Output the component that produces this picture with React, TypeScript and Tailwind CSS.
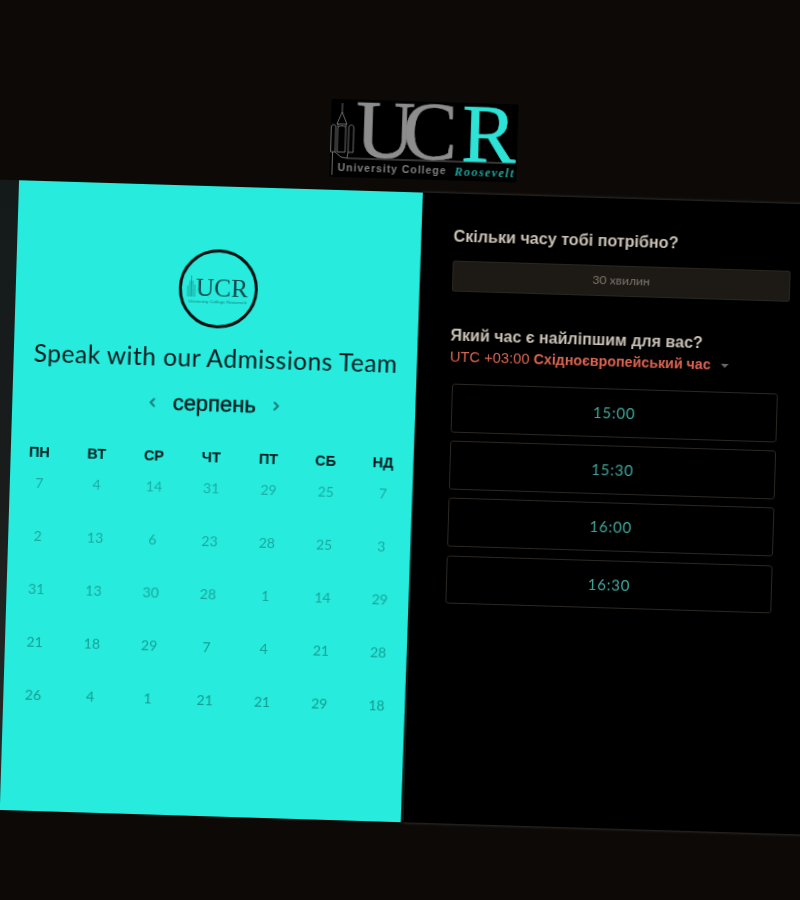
import { ChevronLeft, ChevronRight } from "lucide-react";

const days = ["ПН", "ВТ", "СР", "ЧТ", "ПТ", "СБ", "НД"];
const rows = [
  { color: "text-[#1aada4]", cells: [7, 4, 14, 31, 29, 25, 7] },
  { color: "text-[#19a99f]", cells: [2, 13, 6, 23, 28, 25, 3] },
  { color: "text-[#18a59b]", cells: [31, 13, 30, 28, 1, 14, 29] },
  { color: "text-[#16a096]", cells: [21, 18, 29, 7, 4, 21, 28] },
  { color: "text-[#149b91]", cells: [26, 4, 1, 21, 21, 29, 18] },
];
const slots = ["15:00", "15:30", "16:00", "16:30"];

function Tower({ color }: { color: string }) {
  return (
    <g fill="none" stroke={color} strokeWidth="0.8">
      <path d="M11 4 L11 13 M11 13 L6 25 L16 25 Z M7 25 L7 28 M15 25 L15 28" />
      <path d="M2.5 53 L2.5 76 M0.5 28 C0.5 25 5 25 5 28 L5 53 L0.5 53 Z M18 28 C18 25 23 25 23 28 L23 53 L18 53 Z M7 29 C7 26 15 26 15 29 L15 53 L7 53 Z" />
      <path d="M5 53 L11 58 L17 59 M18 53 L17 59" />
      <path d="M17 59 L185 59" />
    </g>
  );
}

function Logo() {
  return (
    <svg width="187" height="78" viewBox="0 0 187 78" className="block ml-[310px]">
      <rect width="187" height="78" fill="#000" />
      <Tower color="#858585" />
      <g fontFamily="'Liberation Serif', serif" fontSize="82" stroke="currentColor" strokeWidth="0">
        <text x="25" y="57" fill="#8d8d8d" stroke="#8d8d8d" strokeWidth="0.6">U</text>
        <text x="72" y="57" fill="#8d8d8d" stroke="#8d8d8d" strokeWidth="0.6">C</text>
        <text x="131" y="58" fill="#2fe2d6" stroke="#2fe2d6" strokeWidth="0.6">R</text>
      </g>
      <text x="8" y="72" fill="#7f7f7f" fontSize="10.5" fontWeight="700" textLength="108" lengthAdjust="spacing" fontFamily="'Liberation Sans', sans-serif">
        University College
      </text>
      <text x="125" y="72.5" fill="#1fa79e" fontSize="12" fontWeight="700" fontStyle="italic" textLength="59" lengthAdjust="spacing" fontFamily="'Liberation Serif', serif">
        Roosevelt
      </text>
    </svg>
  );
}

function Badge() {
  return (
    <div className="w-[79px] h-[79px] rounded-full border-[3px] border-[#0a0f10] flex items-center justify-center">
      <svg width="62" height="34" viewBox="0 0 62 34" className="block">
        <g fill="none" stroke="#178a85" strokeWidth="0.7">
          <path d="M4.5 4 L4.5 25 M3 9 L3 25 M6 9 L6 25 M8 13 L8 25 M1 14 L1 25" />
        </g>
        <g fontFamily="'Liberation Serif', serif" fontSize="26" fill="#0f4a4c">
          <text x="9" y="24" textLength="52" lengthAdjust="spacingAndGlyphs">UCR</text>
        </g>
        <text x="2" y="31" fontSize="4" fill="#127470" fontFamily="'Liberation Sans', sans-serif" textLength="58" lengthAdjust="spacing">
          University College Roosevelt
        </text>
      </svg>
    </div>
  );
}

export default function App() {
  return (
    <div className="w-[800px] h-[900px] overflow-hidden bg-[#0c0907]">
      <div className="w-[800px] h-[900px] pt-[101px] pl-[11px] rotate-[1.75deg] blur-[0.3px] font-['Liberation_Sans',sans-serif]">
        <Logo />
        <div className="mt-[13px] flex w-[900px]">
          <div className="-ml-[24px] w-[24px] h-[630px] bg-gradient-to-b from-[#141a1a] via-[#1a1c1c] to-[#2a2a2a]" />
          <div className="w-[404px] h-[630px] bg-black">
            <div className="h-full bg-[#27ebdc] pt-[63px] flex flex-col items-center [clip-path:polygon(0_0,100%_0,99.3%_100%,0_100%)]">
              <Badge />
              <div className="mt-[12px] h-[36px] leading-[36px] text-[24.5px] tracking-[0.5px] text-[#0b1a1e] font-['Lato',sans-serif] whitespace-nowrap">
                Speak with our Admissions Team
              </div>
              <div className="mt-[14px] h-[28px] flex items-center justify-center gap-[13px]">
                <ChevronLeft size={14} strokeWidth={3.6} className="text-[#1a7f7a]" />
                <span className="text-[22px] leading-[28px] font-medium text-[#0a1a1c] [-webkit-text-stroke:0.4px_#0a1a1c]">серпень</span>
                <ChevronRight size={14} strokeWidth={3.6} className="text-[#1a7f7a]" />
              </div>
              <div className="mt-[29px] w-[401px] self-start grid grid-cols-7 h-[20px]">
                {days.map((d) => (
                  <div key={d} className="text-center text-[14.5px] leading-[20px] font-bold text-[#07181b]">
                    {d}
                  </div>
                ))}
              </div>
              <div className="mt-[11px] ml-[1px] w-[401px] self-start">
                {rows.map((r) => (
                  <div key={r.cells.join("-")} className="grid grid-cols-7 h-[53px]">
                    {r.cells.map((c, i) => (
                      <div key={i} className={`text-center text-[14px] leading-[20px] font-['Lato',sans-serif] ${r.color}`}>
                        {c}
                      </div>
                    ))}
                  </div>
                ))}
              </div>
            </div>
          </div>
          <div className="w-[402px] h-[630px] bg-black shadow-[0_0_3px_rgba(255,255,255,0.25)] pt-[32px] pl-[32px]">
            <div className="h-[20px] leading-[20px] text-[16.15px] font-bold text-[#c9c1b4] whitespace-nowrap">Скільки часу тобі потрібно?</div>
            <div className="mt-[15px] w-[338px] h-[31px] rounded-[2px] bg-[#1d1a15] border border-[#2a2620] flex items-center justify-center text-[12.2px] text-[#7d776c] font-['Lato','Liberation_Sans',sans-serif]">
              30 хвилин
            </div>
            <div className="mt-[33px] h-[20px] leading-[20px] text-[16.05px] font-bold text-[#c9c1b4] whitespace-nowrap">Який час є найліпшим для вас?</div>
            <div className="mt-[2.5px] h-[20px] flex items-center gap-[10px] text-[#dc6552] whitespace-nowrap">
              <span className="text-[14.7px]">
                UTC +03:00 <span className="font-bold text-[14.25px]">Східноєвропейський час</span>
              </span>
              <span className="w-0 h-0 border-x-[4px] border-x-transparent border-t-[4px] border-t-[#6a6662]" />
            </div>
            <div className="mt-[16.5px] ml-[3px] w-[326px] flex flex-col gap-[8.7px]">
              {slots.map((s) => (
                <div key={s} className="h-[48.5px] rounded-[3px] border border-[#2c2824] flex items-center justify-center text-[15px] text-[#3fa79c] font-['Lato',sans-serif] tracking-[0.8px]">
                  {s}
                </div>
              ))}
            </div>
          </div>
        </div>
      </div>
    </div>
  );
}
